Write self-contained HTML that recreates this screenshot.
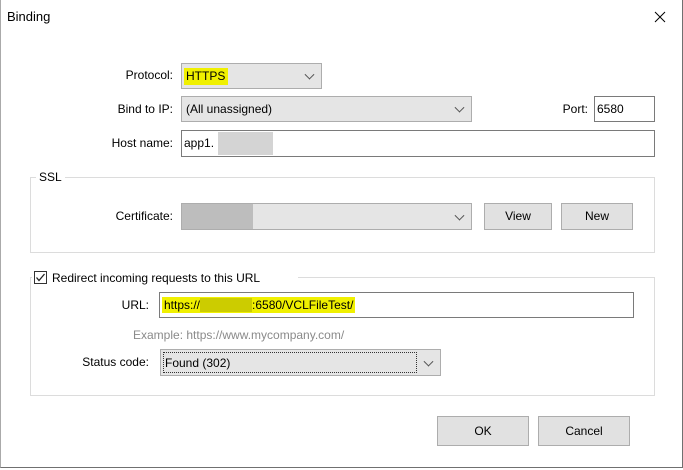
<!DOCTYPE html>
<html><head><style>
body{margin:0;width:683px;height:470px;background:#fff;font-family:"Liberation Sans",sans-serif;font-size:12px;color:#000;position:relative;overflow:hidden}
.a{position:absolute}
.lbl{position:absolute;text-align:right;white-space:nowrap}
.combo{position:absolute;background:#e5e5e5;border:1px solid #adadad;box-sizing:border-box}
.inp{position:absolute;background:#fff;border:1px solid #7a7a7a;box-sizing:border-box}
.btn{position:absolute;background:#e1e1e1;border:1px solid #adadad;box-sizing:border-box;text-align:center}
.chev{position:absolute;right:8px;top:50%;width:6px;height:6px;border-right:1px solid #555;border-bottom:1px solid #555;transform:translateY(-70%) rotate(45deg)}
.grp{position:absolute;border:1px solid #dcdcdc;box-sizing:border-box}
.t{position:absolute;left:4px;top:5px;white-space:nowrap}
</style></head><body>
<div class="a" style="left:0;top:0;width:681px;height:467px;border-right:1px solid #707070;border-bottom:1px solid #707070;border-left:1px solid #aaa"></div>
<div class="a" style="left:7px;top:9px;font-size:13px">Binding</div>
<svg class="a" style="left:654px;top:11px" width="12" height="12"><path d="M1 1L11 11M11 1L1 11" stroke="#000" stroke-width="1"/></svg>

<div class="lbl" style="right:510px;top:68px">Protocol:</div>
<div class="combo" style="left:181px;top:63px;width:141px;height:26px"><span class="a" style="left:2px;top:4px;background:#f0f000;padding:1px 2px 1px 2px;height:15px;width:40px">HTTPS</span><div class="chev"></div></div>

<div class="lbl" style="right:510px;top:102px">Bind to IP:</div>
<div class="combo" style="left:181px;top:96px;width:291px;height:26px"><span class="t">(All unassigned)</span><div class="chev"></div></div>
<div class="lbl" style="right:95px;top:102px">Port:</div>
<div class="inp" style="left:594px;top:96px;width:61px;height:26px"><span class="t" style="left:2px">6580</span></div>

<div class="lbl" style="right:510px;top:136px">Host name:</div>
<div class="inp" style="left:181px;top:130px;width:474px;height:27px"><span class="t" style="left:2px">app1.</span><div class="a" style="left:36px;top:1px;width:55px;height:23px;background:#d4d4d4"></div></div>

<div class="grp" style="left:30px;top:177px;width:625px;height:76px"></div>
<div class="a" style="left:36px;top:170px;background:#fff;padding:0 3px">SSL</div>
<div class="lbl" style="right:510px;top:209px">Certificate:</div>
<div class="combo" style="left:181px;top:203px;width:291px;height:27px"><div class="a" style="left:0;top:0;width:71px;height:25px;background:#bdbdbd"></div><div class="chev"></div></div>
<div class="btn" style="left:484px;top:203px;width:68px;height:27px;line-height:25px">View</div>
<div class="btn" style="left:561px;top:203px;width:72px;height:27px;line-height:25px">New</div>

<div class="grp" style="left:30px;top:277px;width:625px;height:119px"></div>
<div class="a" style="left:32px;top:269px;background:#fff;padding-right:4px;height:18px;width:262px"></div>
<div class="a" style="left:34px;top:271px;width:13px;height:13px;border:1px solid #333;box-sizing:border-box"></div>
<svg class="a" style="left:35px;top:272px" width="11" height="11"><path d="M1.5 5.5L4 8.5L9.5 2" stroke="#222" stroke-width="1.3" fill="none"/></svg>
<div class="a" style="left:52px;top:271px">Redirect incoming requests to this URL</div>

<div class="lbl" style="right:534px;top:298px">URL:</div>
<div class="inp" style="left:159px;top:292px;width:475px;height:26px"><span class="t" style="left:2px;top:4px;background:#f0f000;padding:1px 2px;line-height:14px">https://<span style="display:inline-block;width:52px;height:14px;vertical-align:top;background:#cccc00"></span>:6580/VCLFileTest/</span></div>

<div class="a" style="left:133px;top:328px;color:#8a8a8a">Example: https://www.mycompany.com/</div>

<div class="lbl" style="right:534px;top:355px">Status code:</div>
<div class="combo" style="left:160px;top:349px;width:281px;height:27px"><div class="a" style="left:2px;top:2px;width:254px;height:21px;border:1px dotted #333;box-sizing:border-box"></div><span class="t" style="top:6px">Found (302)</span><div class="chev"></div></div>

<div class="btn" style="left:437px;top:416px;width:92px;height:30px;line-height:28px">OK</div>
<div class="btn" style="left:538px;top:416px;width:92px;height:30px;line-height:28px">Cancel</div>
</body></html>
